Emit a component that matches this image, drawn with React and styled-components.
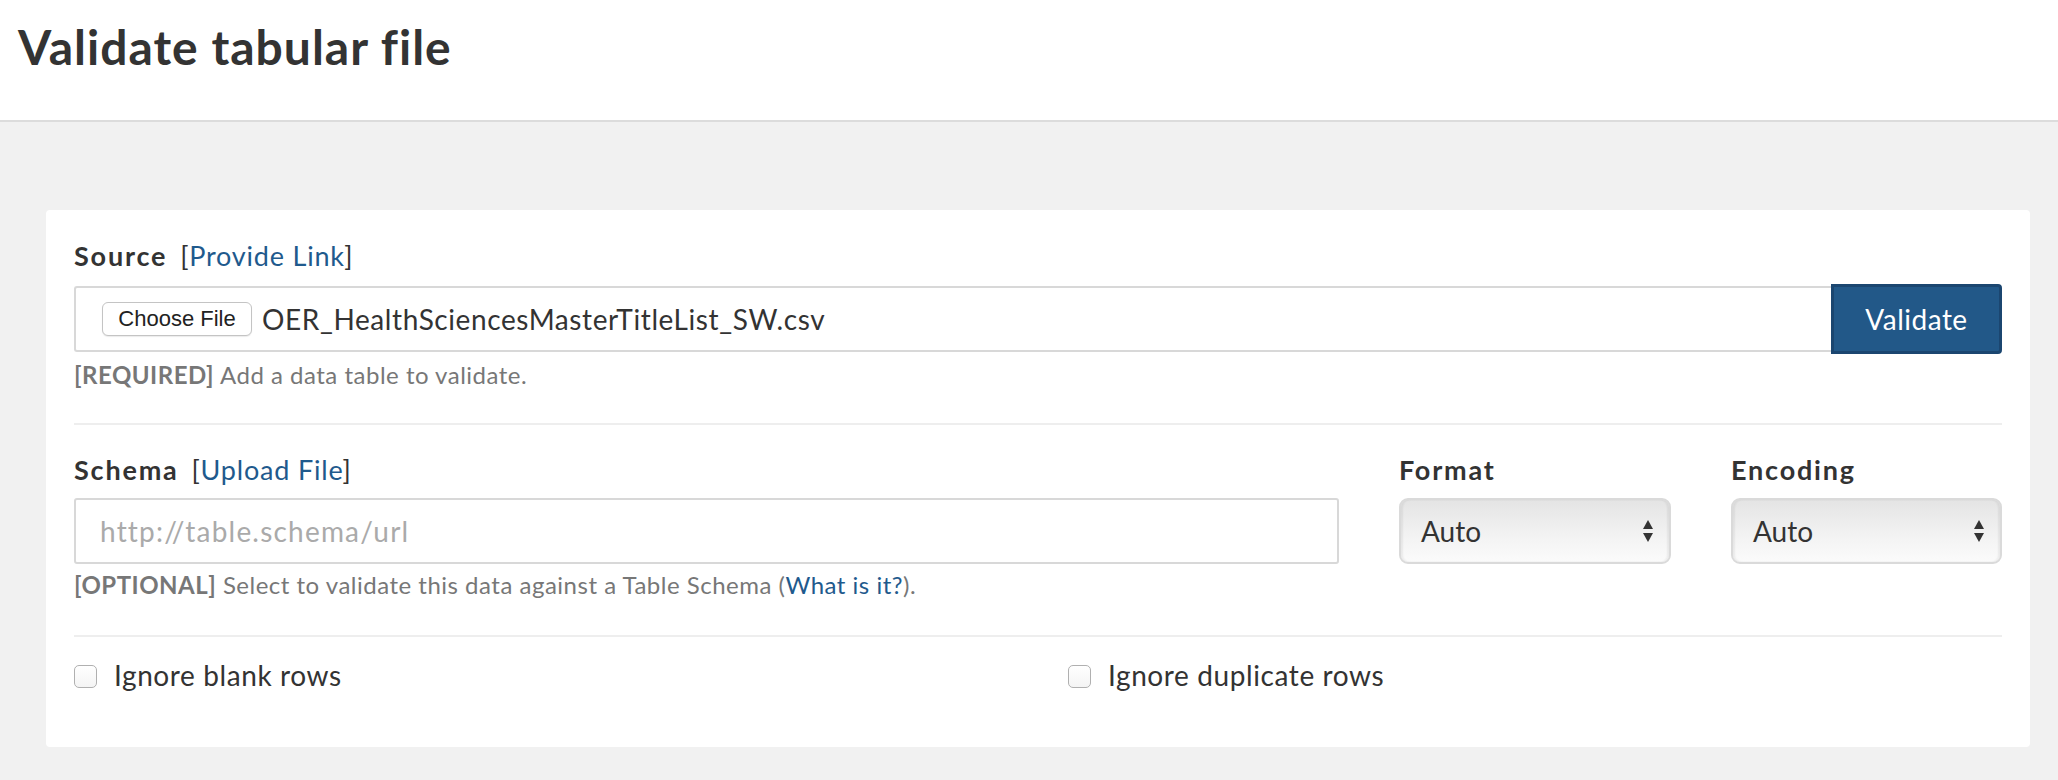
import React from "react"
import styled, { createGlobalStyle } from "styled-components"

const GlobalStyle = createGlobalStyle`
  body {
    margin: 0;
    background: #f1f1f1;
    font-family: Lato, "Open Sans", sans-serif;
    color: #333;
  }
`

const Header = styled.header`
  height: 120px;
  background: #fff;
  border-bottom: 2px solid #dcdcdc;
  padding-left: 18px;
  box-sizing: content-box;
`

const Title = styled.h1`
  margin: 0;
  padding-top: 23px;
  font-size: 48px;
  line-height: 48px;
  font-weight: 700;
  letter-spacing: 1px;
  color: #333;
`

const Card = styled.main`
  margin: 88px 28px 0 46px;
  background: #fff;
  border-radius: 4px;
  padding: 27px 28px 52px;
`

const Section = styled.section`
  padding-bottom: ${props => props.$pb || 31}px;
  margin-bottom: ${props => props.$mb || 26}px;
  border-bottom: 2px solid #eee;
`

const Label = styled.div`
  font-size: 27px;
  line-height: 38px;
  font-weight: 700;
  letter-spacing: 1.8px;
  color: #333;
  margin-bottom: 9px;
  white-space: nowrap;
`

const LabelExtra = styled.span`
  font-weight: 400;
  letter-spacing: 0.8px;
  margin-left: 13px;
`

const Link = styled.a`
  color: #1f5a8d;
  text-decoration: none;
`

const InputGroup = styled.div`
  display: flex;
  align-items: center;
`

const FileField = styled.div`
  flex: 1;
  height: 66px;
  box-sizing: border-box;
  border: 2px solid #d8d8d8;
  border-right: none;
  border-radius: 3px 0 0 3px;
  display: flex;
  align-items: center;
  padding-left: 26px;
`

const ChooseButton = styled.button`
  width: 150px;
  height: 34px;
  background: #fff;
  border: 1px solid #c4c4c4;
  border-radius: 6px;
  box-shadow: 0 1px 1px rgba(0, 0, 0, 0.08);
  font-family: "Liberation Sans", Arial, sans-serif;
  font-size: 22px;
  color: #222;
  padding: 0;
`

const FileName = styled.span`
  margin-left: 10px;
  font-size: 28px;
  letter-spacing: 0.6px;
  color: #333;
`

const ValidateButton = styled.button`
  width: 171px;
  height: 70px;
  background: #225888;
  border: 3px solid #1b4670;
  border-radius: 0 4px 4px 0;
  color: #fff;
  font-family: Lato, sans-serif;
  font-size: 28px;
  letter-spacing: 0.5px;
  padding: 0;
`

const Help = styled.div`
  margin-top: 4px;
  font-size: 24px;
  line-height: 34px;
  letter-spacing: 0.5px;
  color: #777;
  white-space: nowrap;
`

const Grid = styled.div`
  display: grid;
  grid-template-columns: ${props => props.$cols};
  column-gap: 60px;
`

const TextField = styled.div`
  height: 66px;
  box-sizing: border-box;
  border: 2px solid #d8d8d8;
  border-radius: 3px;
  display: flex;
  align-items: center;
  padding-left: 24px;
  font-size: 28px;
  letter-spacing: 1.2px;
  color: #aaa;
`

const Select = styled.div`
  height: 66px;
  box-sizing: border-box;
  border: 2px solid #dadada;
  border-radius: 9px;
  background: linear-gradient(#e4e4e4, #f3f3f3 60%, #fbfbfb);
  box-shadow: inset 2px 0 2px rgba(0, 0, 0, 0.06), inset -2px 0 2px rgba(0, 0, 0, 0.06);
  display: flex;
  align-items: center;
  justify-content: space-between;
  padding: 0 15px 0 20px;
  font-size: 28px;
  color: #333;
`

const CheckRow = styled.label`
  display: flex;
  align-items: center;
  font-size: 28px;
  line-height: 40px;
  letter-spacing: 0.6px;
  color: #333;
`

const Box = styled.span`
  width: 23px;
  height: 23px;
  box-sizing: border-box;
  border: 1px solid #b0b0b0;
  border-radius: 5px;
  background: linear-gradient(#fff, #f4f4f4);
  margin: 3px 17px 0 0;
`

const Arrows = () => (
  <svg width="12" height="24" viewBox="0 0 12 24">
    <path d="M6 1 L11 10 L1 10 Z" fill="#333" />
    <path d="M1 14 L11 14 L6 23 Z" fill="#333" />
  </svg>
)

const App = () => (
  <>
    <GlobalStyle />
    <Header>
      <Title>Validate tabular file</Title>
    </Header>
    <Card>
      <Section>
        <Label>
          Source
          <LabelExtra>
            [<Link href="#">Provide Link</Link>]
          </LabelExtra>
        </Label>
        <InputGroup>
          <FileField>
            <ChooseButton>Choose File</ChooseButton>
            <FileName>OER_HealthSciencesMasterTitleList_SW.csv</FileName>
          </FileField>
          <ValidateButton>Validate</ValidateButton>
        </InputGroup>
        <Help>
          <b>[REQUIRED]</b> Add a data table to validate.
        </Help>
      </Section>
      <Section $pb={33} $mb={18}>
        <Grid $cols="1fr 272px 271px">
          <div>
            <Label>
              Schema
              <LabelExtra>
                [<Link href="#">Upload File</Link>]
              </LabelExtra>
            </Label>
            <TextField>http://table.schema/url</TextField>
            <Help>
              <b>[OPTIONAL]</b> Select to validate this data against a Table Schema (
              <Link href="#">What is it?</Link>).
            </Help>
          </div>
          <div>
            <Label>Format</Label>
            <Select>
              Auto
              <Arrows />
            </Select>
          </div>
          <div>
            <Label>Encoding</Label>
            <Select>
              Auto
              <Arrows />
            </Select>
          </div>
        </Grid>
      </Section>
      <Grid $cols="1fr 1fr">
        <CheckRow>
          <Box />
          Ignore blank rows
        </CheckRow>
        <CheckRow>
          <Box />
          Ignore duplicate rows
        </CheckRow>
      </Grid>
    </Card>
  </>
)

export default App
